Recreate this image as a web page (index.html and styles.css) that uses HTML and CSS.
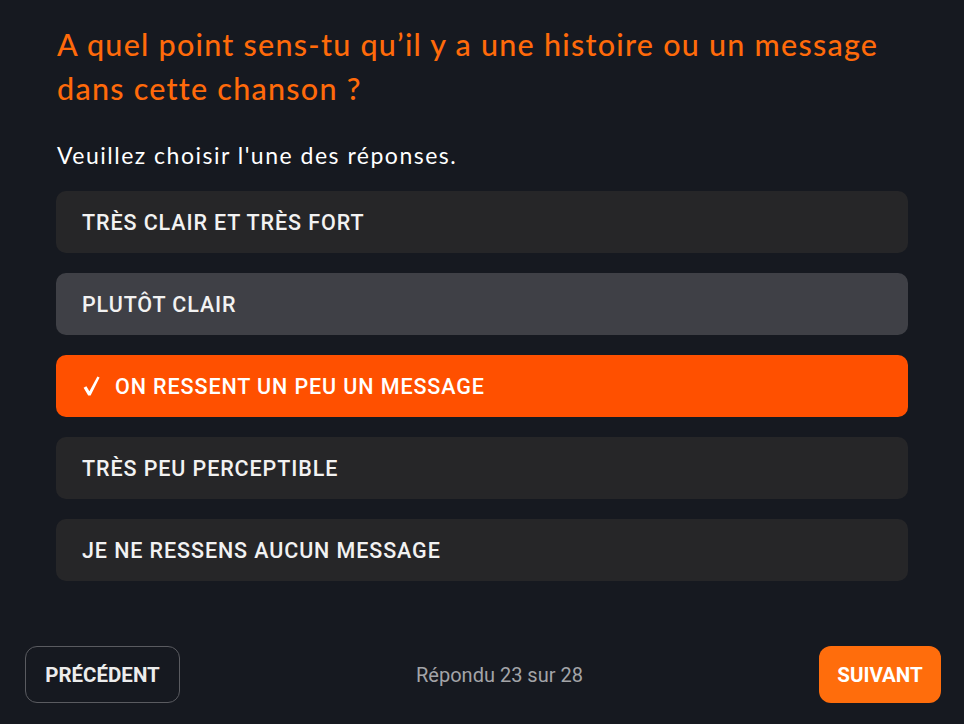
FILE: index.html
```html
<!DOCTYPE html>
<html lang="fr">
<head>
<meta charset="utf-8">
<link rel="stylesheet" href="styles.css">
</head>
<body>
<div class="page">
  <main class="content">
    <h1 class="question">A quel point sens-tu qu’il y a une histoire ou un message dans cette chanson ?</h1>
    <p class="hint">Veuillez choisir l'une des réponses.</p>
    <div class="options">
      <div class="option">TRÈS CLAIR ET TRÈS FORT</div>
      <div class="option hover">PLUTÔT CLAIR</div>
      <div class="option selected"><svg class="check" width="17" height="20" viewBox="0 0 17 20"><path d="M0.6 11.8 L3.4 10.2 L6.4 15.2 L14.4 0.4 L16.6 1.6 L7.6 19.4 L5.2 19.4 Z" fill="#fff"/></svg>ON RESSENT UN PEU UN MESSAGE</div>
      <div class="option">TRÈS PEU PERCEPTIBLE</div>
      <div class="option">JE NE RESSENS AUCUN MESSAGE</div>
    </div>
  </main>
  <footer class="footer">
    <button class="btn prev">PRÉCÉDENT</button>
    <span class="counter">Répondu 23 sur 28</span>
    <button class="btn next">SUIVANT</button>
  </footer>
</div>
</body>
</html>
```
FILE: styles.css
```css
html, body {
  margin: 0;
  padding: 0;
  background: #161920;
}
.page {
  width: 964px;
  height: 724px;
  display: flex;
  flex-direction: column;
  box-sizing: border-box;
}
.content {
  padding: 22px 56px 0 56px;
}
.question {
  margin: 0;
  font-family: Lato, "Open Sans", sans-serif;
  font-weight: 500;
  font-size: 30.5px;
  letter-spacing: 1.25px;
  line-height: 44px;
  color: #ff6a0a;
  padding-left: 1px;
}
.hint {
  margin: 30px 0 0 1px;
  font-family: Lato, "Open Sans", sans-serif;
  font-size: 23px;
  letter-spacing: 1.5px;
  line-height: 30px;
  color: #ffffff;
}
.options {
  margin-top: 21px;
  display: flex;
  flex-direction: column;
  gap: 20px;
}
.option {
  height: 62px;
  box-sizing: border-box;
  border-radius: 10px;
  background: #262628;
  display: flex;
  align-items: center;
  padding-left: 26px;
  font-family: Roboto, "Liberation Sans", sans-serif;
  font-weight: 500;
  font-size: 21.5px;
  letter-spacing: 0.9px;
  color: #f2f2f2;
}
.option.hover {
  background: #3f4046;
}
.option.selected {
  background: #ff5000;
  color: #ffffff;
}
.check {
  margin-left: 1px;
  margin-right: 15px;
  flex: none;
}
.footer {
  margin-top: auto;
  padding: 0 23px 21px 25px;
  display: flex;
  align-items: center;
  justify-content: space-between;
}
.btn {
  height: 57px;
  border-radius: 12px;
  font-family: Roboto, "Liberation Sans", sans-serif;
  font-weight: 700;
  font-size: 20.5px;
  cursor: pointer;
  padding: 0;
}
.prev {
  background: transparent;
  border: 1px solid #5a5b60;
  color: #ececec;
  width: 155px;
}
.next {
  background: #ff6d0c;
  border: none;
  color: #ffffff;
  width: 122px;
}
.counter {
  font-family: Roboto, "Liberation Sans", sans-serif;
  font-size: 20px;
  color: #a3a4a8;
}
```
